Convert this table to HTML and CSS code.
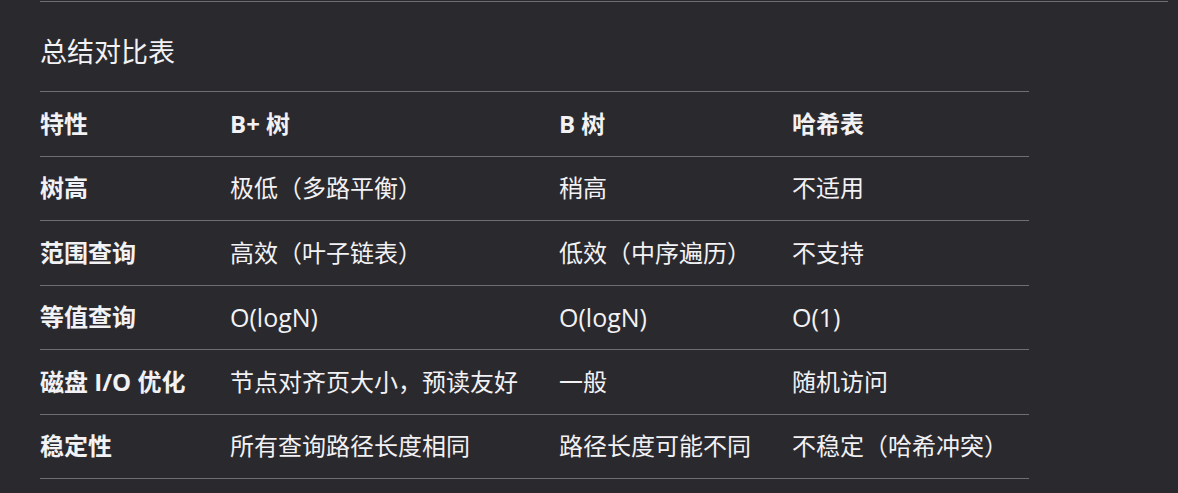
FILE: index.html
```html
<!DOCTYPE html>
<html lang="zh-CN">
<head>
<meta charset="utf-8">
<link rel="stylesheet" href="styles.css">
</head>
<body>
<div class="wrap">
  <div class="rule"></div>
  <h3 class="title">总结对比表</h3>
  <table class="cmp">
    <colgroup>
      <col class="c1"><col class="c2"><col class="c3"><col class="c4">
    </colgroup>
    <thead>
      <tr><th>特性</th><th>B+ 树</th><th>B 树</th><th>哈希表</th></tr>
    </thead>
    <tbody>
      <tr><td class="k">树高</td><td>极低（多路平衡）</td><td>稍高</td><td>不适用</td></tr>
      <tr><td class="k">范围查询</td><td>高效（叶子链表）</td><td>低效（中序遍历）</td><td>不支持</td></tr>
      <tr><td class="k">等值查询</td><td class="lat">O(logN)</td><td class="lat">O(logN)</td><td class="lat">O(1)</td></tr>
      <tr><td class="k">磁盘 I/O 优化</td><td>节点对齐页大小，预读友好</td><td>一般</td><td>随机访问</td></tr>
      <tr><td class="k">稳定性</td><td>所有查询路径长度相同</td><td>路径长度可能不同</td><td>不稳定（哈希冲突）</td></tr>
    </tbody>
  </table>
</div>
</body>
</html>
```

FILE: styles.css
```css
html, body {
  margin: 0;
  padding: 0;
  background: #2a292e;
  color: #f2f1f4;
  font-family: "Open Sans", "Noto Sans CJK SC", sans-serif;
}
.wrap {
  padding: 1px 0 0 40px;
  height: 492px;
  overflow: hidden;
}
.rule {
  width: 1128px;
  border-top: 1px solid #6e6d73;
}
.title {
  margin: 32px 0 21px;
  font-size: 27px;
  line-height: 36px;
  font-weight: 400;
}
.cmp {
  width: 989px;
  border-collapse: collapse;
  table-layout: fixed;
  border-top: 1px solid #6e6d73;
  font-size: 24px;
}
.c1 { width: 190px; }
.c2 { width: 329px; }
.c3 { width: 233px; }
.c4 { width: 237px; }
.cmp th, .cmp td {
  text-align: left;
  padding: 15.75px 0;
  line-height: 32px;
  border-bottom: 1px solid #6e6d73;
  white-space: nowrap;
}
.cmp th, .cmp td.k {
  font-weight: 700;
}
.cmp td {
  font-weight: 400;
}
.cmp td.lat {
  font-size: 25px;
}
```
